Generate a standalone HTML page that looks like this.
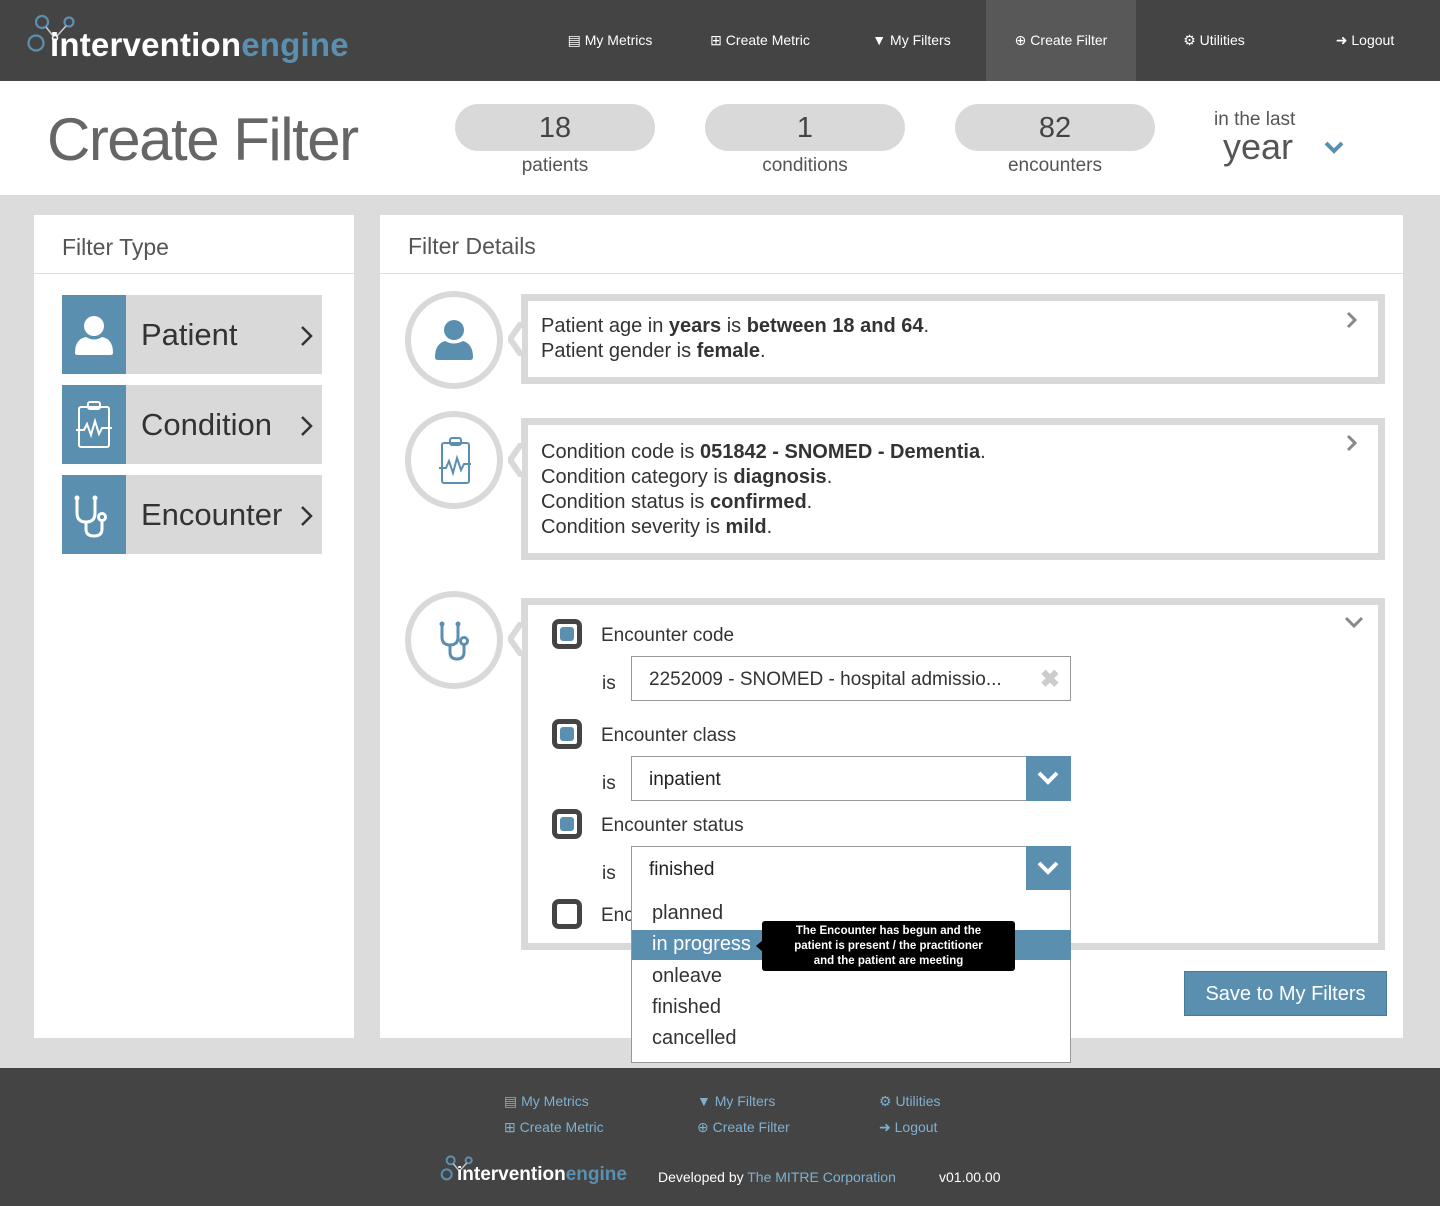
<!DOCTYPE html>
<html><head><meta charset="utf-8">
<style>
*{box-sizing:border-box;margin:0;padding:0}
body{width:1440px;height:1206px;position:relative;background:#dcdcdc;font-family:"Liberation Sans",Arial,sans-serif;color:#333;overflow:hidden}
.abs{position:absolute}
.nav{left:0;top:0;width:1440px;height:81px;background:#444}
.nav .it{position:absolute;top:0;height:81px;line-height:80px;color:#fff;font-size:14px;text-align:center}
.hdr{left:0;top:81px;width:1440px;height:114px;background:#fff}
.pill{position:absolute;top:104px;width:200px;height:47px;border-radius:24px;background:#d9d9d9;text-align:center;font-size:29px;line-height:48px;color:#444}
.plab{position:absolute;top:155px;width:200px;text-align:center;font-size:19px;color:#555}
.panel{background:#fff}
.ph{position:absolute;font-size:23px;color:#555}
.ft{position:absolute;left:62px;width:260px;height:79px;background:#d9d9d9}
.ft .ic{position:absolute;left:0;top:0;width:64px;height:79px;background:#5b8fb0}
.ft .lb{position:absolute;left:79px;top:0;line-height:80px;font-size:31px;color:#333}
.ft .ch{position:absolute;right:8px;top:30px}
.circ{position:absolute;width:98px;height:98px;border-radius:50%;border:6px solid #d9d9d9;background:#fff}
.box{position:absolute;border:7px solid #d9d9d9;background:#fff}
.txt{font-size:20px;line-height:25px;color:#333}
.cb{position:absolute;width:30px;height:30px;border:5px solid #444;border-radius:7px;background:#fff}
.cb i{position:absolute;left:3px;top:3px;width:14px;height:14px;background:#5b8fb0;border-radius:3px}
.lbl{position:absolute;font-size:19px;color:#333}
.inp{position:absolute;left:631px;width:440px;height:45px;border:1px solid #999;background:#fff;font-size:19px;line-height:46px;padding-left:17px;color:#222}
.dd{position:absolute;right:-1px;top:-1px;width:45px;height:45px;background:#5b8fb0}
.foot{left:0;top:1068px;width:1440px;height:138px;background:#444}
.fl{position:absolute;color:#7fb0d0;font-size:14px}
</style></head><body>

<div class="abs nav">
  <svg class="abs" style="left:26px;top:12px" width="60" height="46" viewBox="0 0 60 46">
    <circle cx="16" cy="10" r="6" fill="none" stroke="#5b8fb0" stroke-width="2.2"/>
    <circle cx="43" cy="10" r="4.5" fill="none" stroke="#5b8fb0" stroke-width="2.2"/>
    <circle cx="10" cy="31" r="7.5" fill="none" stroke="#5b8fb0" stroke-width="2.2"/>
    <line x1="20" y1="15" x2="28" y2="25" stroke="#ccc" stroke-width="1.5"/>
    <line x1="40" y1="14" x2="31" y2="24" stroke="#ccc" stroke-width="1.5"/>
    <circle cx="29" cy="26" r="2.5" fill="#444" stroke="#fff" stroke-width="1.5"/>
  </svg>
  <div class="abs" style="left:50px;top:26px;font-size:33px;font-weight:bold;letter-spacing:0.2px;color:#fff">intervention<span style="color:#5b8fb0">engine</span></div>
  <div class="it" style="left:545px;width:130px">&#9636; My Metrics</div>
  <div class="it" style="left:690px;width:140px">&#8862; Create Metric</div>
  <div class="it" style="left:855px;width:113px">&#9660; My Filters</div>
  <div class="it" style="left:986px;width:150px;background:#585858">&#8853; Create Filter</div>
  <div class="it" style="left:1160px;width:108px">&#9881; Utilities</div>
  <div class="it" style="left:1315px;width:100px">&#10140; Logout</div>
</div>

<div class="abs hdr"></div>
<div class="abs" style="left:47px;top:105px;font-size:60px;color:#666;letter-spacing:-1.5px">Create Filter</div>
<div class="pill" style="left:455px">18</div><div class="plab" style="left:455px">patients</div>
<div class="pill" style="left:705px">1</div><div class="plab" style="left:705px">conditions</div>
<div class="pill" style="left:955px">82</div><div class="plab" style="left:955px">encounters</div>
<div class="abs" style="left:1214px;top:109px;font-size:19px;color:#555">in the last</div>
<div class="abs" style="left:1223px;top:126px;font-size:36px;color:#555">year</div>
<svg class="abs" style="left:1323px;top:140px" width="22" height="16"><path d="M3 3 L11 11 L19 3" fill="none" stroke="#5b8fb0" stroke-width="4"/></svg>

<!-- left panel -->
<div class="abs panel" style="left:34px;top:215px;width:320px;height:823px"></div>
<div class="ph" style="left:62px;top:234px">Filter Type</div>
<div class="abs" style="left:34px;top:273px;width:320px;height:1px;background:#ddd"></div>

<div class="ft" style="top:295px"><div class="ic">
<svg width="64" height="79"><circle cx="32" cy="31" r="10" fill="#fff"/><path d="M13 58 Q13 44 24 42 Q32 47 40 42 Q51 44 51 58 Q51 60 48 60 L16 60 Q13 60 13 58Z" fill="#fff"/></svg></div>
<div class="lb">Patient</div><svg class="ch" width="14" height="22"><path d="M2 2 L11 11 L2 20" fill="none" stroke="#333" stroke-width="2.5"/></svg></div>

<div class="ft" style="top:385px"><div class="ic">
<svg width="64" height="79"><g fill="none" stroke="#fff" stroke-width="2"><rect x="17" y="22" width="30" height="40" rx="2"/><rect x="26" y="17" width="12" height="7" rx="2"/><path d="M14 45 L22 45 L25 39 L29 50 L33 36 L37 49 L40 43 L50 43"/></g></svg></div>
<div class="lb">Condition</div><svg class="ch" width="14" height="22"><path d="M2 2 L11 11 L2 20" fill="none" stroke="#333" stroke-width="2.5"/></svg></div>

<div class="ft" style="top:475px"><div class="ic">
<svg width="64" height="79"><g fill="none" stroke="#fff" stroke-width="3"><path d="M15 24 L15 38 Q15 47 24 47 Q33 47 33 38 L33 24"/><path d="M24 47 L24 54 Q24 61 32 61 Q40 61 40 54 L40 46"/><circle cx="40" cy="42" r="3.5"/></g><circle cx="15" cy="23" r="2.5" fill="#fff"/><circle cx="33" cy="23" r="2.5" fill="#fff"/></svg></div>
<div class="lb">Encounter</div><svg class="ch" width="14" height="22"><path d="M2 2 L11 11 L2 20" fill="none" stroke="#333" stroke-width="2.5"/></svg></div>

<!-- right panel -->
<div class="abs panel" style="left:380px;top:215px;width:1023px;height:823px"></div>
<div class="ph" style="left:408px;top:233px">Filter Details</div>
<div class="abs" style="left:380px;top:273px;width:1023px;height:1px;background:#ddd"></div>

<!-- patient row -->
<div class="circ" style="left:405px;top:291px"><svg class="abs" style="left:0;top:0" width="86" height="86"><circle cx="43" cy="33" r="10" fill="#5b8fb0"/><path d="M24 60 Q24 47 34 44 Q43 49 52 44 Q62 47 62 60 Q62 63 59 63 L27 63 Q24 63 24 60Z" fill="#5b8fb0"/></svg></div>
<div class="box" style="left:521px;top:294px;width:864px;height:90px">
  <div class="txt abs" style="left:13px;top:13px">Patient age in <b>years</b> is <b>between 18 and 64</b>.<br>Patient gender is <b>female</b>.</div>
  <svg class="abs" style="right:20px;top:10px" width="12" height="18"><path d="M2 2 L9 9 L2 16" fill="none" stroke="#888" stroke-width="3"/></svg>
</div>
<svg class="abs" style="left:508px;top:322px" width="20" height="34"><path d="M14 0 L2 17 L14 34" fill="#fff" stroke="#d9d9d9" stroke-width="6"/></svg>

<!-- condition row -->
<div class="circ" style="left:405px;top:411px"><svg class="abs" style="left:0;top:0" width="86" height="86"><g fill="none" stroke="#5b8fb0" stroke-width="2"><rect x="31" y="26" width="27" height="40" rx="2"/><rect x="39" y="21" width="11" height="7" rx="2"/><path d="M28 51 L35 51 L38 44 L42 56 L46 41 L50 53 L53 47 L60 47"/></g></svg></div>
<div class="box" style="left:521px;top:418px;width:864px;height:142px">
  <div class="txt abs" style="left:13px;top:15px">Condition code is <b>051842 - SNOMED - Dementia</b>.<br>Condition category is <b>diagnosis</b>.<br>Condition status is <b>confirmed</b>.<br>Condition severity is <b>mild</b>.</div>
  <svg class="abs" style="right:20px;top:9px" width="12" height="18"><path d="M2 2 L9 9 L2 16" fill="none" stroke="#888" stroke-width="3"/></svg>
</div>
<svg class="abs" style="left:508px;top:443px" width="20" height="34"><path d="M14 0 L2 17 L14 34" fill="#fff" stroke="#d9d9d9" stroke-width="6"/></svg>

<!-- encounter row -->
<div class="circ" style="left:405px;top:591px"><svg class="abs" style="left:0;top:0" width="86" height="86"><g fill="none" stroke="#5b8fb0" stroke-width="3"><path d="M31 28 L31 40 Q31 48 39 48 Q47 48 47 40 L47 28"/><path d="M39 48 L39 55 Q39 62 46 62 Q53 62 53 55 L53 48"/><circle cx="53" cy="44" r="3.5"/></g><circle cx="31" cy="27" r="2.5" fill="#5b8fb0"/><circle cx="47" cy="27" r="2.5" fill="#5b8fb0"/></svg></div>
<div class="box" style="left:521px;top:598px;width:864px;height:352px">
  <svg class="abs" style="right:14px;top:11px" width="20" height="14"><path d="M2 2 L10 10 L18 2" fill="none" stroke="#888" stroke-width="3"/></svg>
</div>
<svg class="abs" style="left:508px;top:622px" width="20" height="34"><path d="M14 0 L2 17 L14 34" fill="#fff" stroke="#d9d9d9" stroke-width="6"/></svg>

<div class="cb" style="left:552px;top:619px"><i></i></div>
<div class="lbl" style="left:601px;top:625px">Encounter code</div>
<div class="lbl" style="left:602px;top:673px">is</div>
<div class="inp" style="top:656px;color:#333">2252009 - SNOMED - hospital admissio...<span class="abs" style="right:10px;top:0;color:#ccc;font-size:24px;font-weight:bold">&#10006;</span></div>

<div class="cb" style="left:552px;top:719px"><i></i></div>
<div class="lbl" style="left:601px;top:725px">Encounter class</div>
<div class="lbl" style="left:602px;top:773px">is</div>
<div class="inp" style="top:756px">inpatient<div class="dd"><svg width="45" height="45"><path d="M13 17 L22 26 L31 17" fill="none" stroke="#fff" stroke-width="4"/></svg></div></div>

<div class="cb" style="left:552px;top:809px"><i></i></div>
<div class="lbl" style="left:601px;top:815px">Encounter status</div>
<div class="lbl" style="left:602px;top:863px">is</div>
<div class="inp" style="top:846px">finished<div class="dd"><svg width="45" height="45"><path d="M13 17 L22 26 L31 17" fill="none" stroke="#fff" stroke-width="4"/></svg></div></div>

<div class="cb" style="left:552px;top:899px"></div>
<div class="lbl" style="left:601px;top:905px">Enc</div>

<!-- dropdown -->
<div class="abs" style="left:631px;top:890px;width:440px;height:173px;background:#fff;border:1px solid #999;border-top:none">
  <div class="abs" style="left:20px;top:12px;font-size:20px;color:#333">planned</div>
  <div class="abs" style="left:0;top:40px;width:439px;height:30px;background:#5b8fb0"></div>
  <div class="abs" style="left:20px;top:43px;font-size:20px;color:#fff">in progress</div>
  <div class="abs" style="left:20px;top:75px;font-size:20px;color:#333">onleave</div>
  <div class="abs" style="left:20px;top:106px;font-size:20px;color:#333">finished</div>
  <div class="abs" style="left:20px;top:137px;font-size:20px;color:#333">cancelled</div>
</div>
<div class="abs" style="left:762px;top:921px;width:253px;height:50px;background:#000;border-radius:3px;color:#fff;font-size:11.5px;font-weight:bold;text-align:center;line-height:15px;padding-top:3px">The Encounter has begun and the<br>patient is present / the practitioner<br>and the patient are meeting</div>
<svg class="abs" style="left:754px;top:940px" width="9" height="12"><path d="M9 0 L2 6 L9 12Z" fill="#000"/></svg>

<div class="abs" style="left:1184px;top:971px;width:203px;height:45px;background:#5b8fb0;border:1px solid #4a7a9a;color:#fff;font-size:20px;line-height:44px;text-align:center">Save to My Filters</div>

<!-- footer -->
<div class="abs foot"></div>
<div class="fl" style="left:504px;top:1093px">&#9636; My Metrics</div>
<div class="fl" style="left:504px;top:1119px">&#8862; Create Metric</div>
<div class="fl" style="left:697px;top:1093px">&#9660; My Filters</div>
<div class="fl" style="left:697px;top:1119px">&#8853; Create Filter</div>
<div class="fl" style="left:879px;top:1093px">&#9881; Utilities</div>
<div class="fl" style="left:879px;top:1119px">&#10140; Logout</div>
<svg class="abs" style="left:440px;top:1153px" width="40" height="32" viewBox="0 0 60 46"><circle cx="16" cy="10" r="6" fill="none" stroke="#5b8fb0" stroke-width="3"/><circle cx="43" cy="10" r="4.5" fill="none" stroke="#5b8fb0" stroke-width="3"/><circle cx="10" cy="31" r="7.5" fill="none" stroke="#5b8fb0" stroke-width="3"/><line x1="20" y1="15" x2="28" y2="25" stroke="#ccc" stroke-width="2"/><line x1="40" y1="14" x2="31" y2="24" stroke="#ccc" stroke-width="2"/></svg>
<div class="abs" style="left:457px;top:1164px;font-size:19px;color:#fff;font-weight:bold;letter-spacing:0px">intervention<span style="color:#5b8fb0">engine</span></div>
<div class="abs" style="left:658px;top:1169px;font-size:14px;color:#fff">Developed by <span style="color:#7fb0d0">The MITRE Corporation</span></div>
<div class="abs" style="left:939px;top:1169px;font-size:14px;color:#fff">v01.00.00</div>
</body></html>
